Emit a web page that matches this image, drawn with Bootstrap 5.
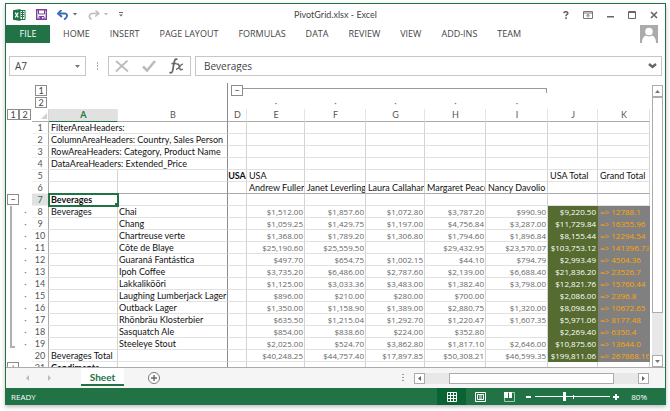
<!DOCTYPE html>
<html lang="en">
<head>
<meta charset="utf-8">
<meta name="viewport" content="width=device-width, initial-scale=1">
<title>PivotGrid.xlsx - Excel</title>
<link href="https://cdn.jsdelivr.net/npm/bootstrap@5.3.0/dist/css/bootstrap.min.css" rel="stylesheet">
<style>
  :root { --xl: #217346; --line: #d4d4d4; --edge: #ababab; --ink: #444; }
  body { font-family: "Open Sans", "Noto Sans", sans-serif; font-size: 9px; line-height: 12px; color: var(--ink); background: #fff; padding: 3px 4px 6px 5px; }
  button, input { font: inherit; color: inherit; }
  button { background: none; border: 0; padding: 0; }
  svg { display: block; }
  .app-window { height: calc(100vh - 9px); min-height: 300px; border: 1px solid var(--xl); border-bottom: 0; box-shadow: 0 2px 4px rgba(0,0,0,.25); background: #fff; }

  .title-bar { height: 21px; padding: 0 7px; }
  .title-side { flex: 1 1 0; }
  .quick-tools { gap: 10px; }
  .window-tools { gap: 14px; }
  .title-text { font-family: Lato, sans-serif; }
  .ribbon-tabs { height: 18px; padding-right: 7px; }
  .ribbon-tabs .nav-link { padding: 0; line-height: 18px; color: var(--ink); }
  .ribbon-tabs .file-tab { width: 44px; background: var(--xl); color: #fff; text-align: center; }
  .tab-list { gap: 20px; padding-left: 13px; }

  .formula-row { height: 20px; margin: 13px 3px 7px; font-size: 10px; }
  .boxed { border: 1px solid #c6c6c6; background: #fff; }
  .boxed input { border: 0; outline: 0; background: none; min-width: 0; }
  .name-box { width: 77px; padding: 0 5px; }
  .fx-box { width: 83px; padding: 0 6px; }
  .grip { width: 22px; }

  .grid-area { min-height: 0; }
  .sheet-wrap { min-width: 0; overflow: hidden; }
  .sheet-grid { table-layout: fixed; width: 100%; border-collapse: separate; border-spacing: 0; color: #111; line-height: 11px; font-family: Lato, "Open Sans", sans-serif; }
  .sheet-grid td, .sheet-grid th { padding: 0 1px 0 2px; height: 12px; overflow: hidden; white-space: nowrap; font-weight: 400; vertical-align: top; }
  .sheet-grid tbody td { border-right: 1px solid var(--line); border-bottom: 1px solid #e2e2e2; }
  .sheet-grid thead .levels th { height: 12px; padding: 0; color: #777; }
  .sheet-grid thead .levels:first-child th { height: 14px; padding-top: 2px; }
  .sheet-grid thead .letters th { height: 13px; line-height: 12px; text-align: center; border-right: 1px solid #e4e4e4; border-bottom: 1px solid var(--edge); color: #555; }
  .sheet-grid thead .letters th.corner { border-color: #fff var(--line) var(--edge) #fff; }
  .sheet-grid thead .letters th.on { background: #e1e1e1; color: var(--xl); font-weight: 700; border-bottom-color: var(--xl); }
  .sheet-grid tr > .gut { border: 0 !important; padding: 0 !important; text-align: center; color: #777; }
  .sheet-grid tbody th { text-align: center; padding: 0; border-right: 1px solid var(--edge); border-bottom: 1px solid #f0f0f0; color: #555; }
  .sheet-grid tbody th.on { background: #e1e1e1; color: var(--xl); }
  .sheet-grid .freeze { border-right: 1px solid #8c8c8c !important; padding: 0 0 0 1px; }
  .sheet-grid .freeze[colspan] { padding-left: 2px; }
  .sheet-grid .freeze-row td { border-bottom-color: var(--edge); }
  .sheet-grid .amount { text-align: right; font-family: "Open Sans", sans-serif; font-size: 8px; color: #666; }
  .sheet-grid td.total { background: #556b2f; border-color: #556b2f; color: #fff; }
  .sheet-grid td.grand { background: #808080; border-color: #808080; color: #ffa500; font-family: "Open Sans", sans-serif; font-size: 8px; }
  .sheet-grid td.picked { position: relative; overflow: visible; outline: 2px solid var(--xl); outline-offset: -1px; }
  .picked::after { content: ""; position: absolute; right: -2px; bottom: -2px; width: 4px; height: 4px; background: var(--xl); }
  .level-btn { display: block; width: 12px; height: 11px; line-height: 9px; font-size: 9px; border: 1px solid #8c8c8c; background: #fff; color: #444; text-align: center; }
  .gut .level-btn { margin-left: 1px; }
  .levels .level-btn { margin-left: 3px; }
  .span-line { height: 5px; margin: 3px 1px 0 0; border: solid #999; border-width: 1px 1px 0 0; }
  .sheet-grid .bracket { background: linear-gradient(#b0b0b0, #b0b0b0) 4px 0 / 2px 142px no-repeat, linear-gradient(#b0b0b0, #b0b0b0) 4px 140px / 5px 2px no-repeat; }

  .scroll-v { width: 11px; margin: 2px 2px 0 2px; background: #e8e8e8; }
  .scroll-btn { width: 11px; height: 12px; border: 1px solid var(--edge); background: #fff; flex: none; display: flex; align-items: center; justify-content: center; }
  .thumb { border: 1px solid var(--edge); background: #fff; }
  .scroll-v .thumb { flex: 217 0 0; }
  .scroll-v .rest { flex: 42 0 0; }

  .sheet-bar { height: 21px; flex: none; background: #f5f5f5; border-top: 1px solid var(--edge); }
  .sheet-arrows { width: 75px; padding-left: 20px; gap: 17px; }
  .sheet-tab { width: 43px; height: 18px; background: #fff; border-bottom: 2px solid var(--xl); color: var(--xl); font-family: Lato, sans-serif; font-weight: 700; font-size: 10px; line-height: 18px; text-align: center; text-decoration: none; }
  .scroll-h { width: 235px; height: 11px; margin-right: 16px; background: #e8e8e8; }
  .scroll-h .thumb { width: 165px; height: 11px; margin-left: 24px; }
  .scroll-h .scroll-btn { height: 11px; }

  .status-bar { height: 17px; flex: none; background: var(--xl); color: #fff; font-size: 8px; padding: 0 19px 0 2px; margin: 0 -1px; }
  .view-btn { width: 29px; height: 17px; display: flex; align-items: center; justify-content: center; }
  .view-btn.on { background: #0a6332; }
  .zoom-out { margin-left: 2px; }
  .zoom-range { appearance: none; -webkit-appearance: none; width: 75px; height: 11px; margin: 0 3px; background: linear-gradient(#fff, #fff) 38px 4px / 1px 4px no-repeat, linear-gradient(#fff, #fff) 0 5px / 100% 1px no-repeat; }
  .zoom-range::-webkit-slider-thumb { -webkit-appearance: none; width: 3px; height: 9px; background: #fff; border: 0; border-radius: 0; }
</style>
<script src="https://cdn.jsdelivr.net/npm/bootstrap@5.3.0/dist/js/bootstrap.bundle.min.js"></script>
</head>
<body>
<div class="app-window d-flex flex-column">
  <header>
    <div class="title-bar d-flex align-items-center">
      <div class="title-side quick-tools d-flex align-items-center">
        <svg width="13" height="12" viewBox="0 0 13 12" role="img" aria-label="Excel"><path d="M7 1.5h5v9H7" fill="#fff" stroke="#217346"/><path d="M8 3.5h3M8 5.5h3M8 7.5h3M9.500 2v8" stroke="#217346"/><path d="M0 1.200 7.500 0v12L0 10.800z" fill="#217346"/><path d="m2.200 3.700 3 4.600m0-4.600-3 4.600" stroke="#fff" stroke-width="1.200"/></svg>
        <button type="button" aria-label="Save"><svg width="11" height="11" viewBox="0 0 11 11"><path d="M.7.700h9.600v9.600H.7z" fill="#fff" stroke="#7b3fa0" stroke-width="1.400"/><path d="M2.500 1v4h6V1M3 10V7.500h5V10" fill="none" stroke="#7b3fa0"/><path d="M4 8h2v2H4z" fill="#7b3fa0"/></svg></button>
        <button type="button" aria-label="Undo" class="d-flex align-items-center"><svg width="12" height="10" viewBox="0 0 12 10"><path d="M1.500 3.500h6c3.500 0 3.500 4-.5 6" fill="none" stroke="#3d6db5" stroke-width="1.900"/><path d="M4.500 0 1 3.500l4 3.500" fill="none" stroke="#3d6db5" stroke-width="1.900"/></svg><svg width="5" height="3" viewBox="0 0 5 3" class="ms-1"><path d="M0 0h4L2 2.500z" fill="#666"/></svg></button>
        <button type="button" aria-label="Redo" class="d-flex align-items-center"><svg width="12" height="10" viewBox="0 0 12 10"><path d="M10.500 3.500h-6C1 3.500 0 7 3.500 9.300" fill="none" stroke="#bbb" stroke-width="1.500"/><path d="m7.500.5 3.300 3-3.600 3" fill="none" stroke="#bbb" stroke-width="1.500"/></svg><svg width="5" height="3" viewBox="0 0 5 3" class="ms-1"><path d="M0 0h4L2 2.500z" fill="#bbb"/></svg></button>
        <button type="button" aria-label="Customize toolbar"><svg width="5" height="5" viewBox="0 0 5 5"><path d="M0 0h4v1H0zM0 2.500h4L2 4.500z" fill="#666"/></svg></button>
      </div>
      <div class="title-text">PivotGrid.xlsx - Excel</div>
      <div class="title-side window-tools d-flex align-items-center justify-content-end">
        <button type="button" aria-label="Help"><svg width="6" height="8" viewBox="0 0 6 8"><path d="M.8 2.200C1 .2 4.800.2 4.800 2.200 4.800 3.500 3 3.500 3 5.300M3 6.300V8" fill="none" stroke="#666" stroke-width="1.600"/></svg></button>
        <button type="button" aria-label="Ribbon display"><svg width="10" height="8" viewBox="0 0 10 8"><path d="M.5.5h9v7h-9zM.5 2h9M5 6.500v-3M3.300 5 5 3.400 6.700 5" fill="none" stroke="#777"/></svg></button>
        <button type="button" aria-label="Minimize"><svg width="7" height="8" viewBox="0 0 7 8"><path d="M0 5h7v1.500H0z" fill="#666"/></svg></button>
        <button type="button" aria-label="Maximize"><svg width="8" height="8" viewBox="0 0 8 8"><path d="M.5.5h7v7h-7zM0 1.500h8" fill="none" stroke="#666"/></svg></button>
        <button type="button" aria-label="Close"><svg width="8" height="8" viewBox="0 0 8 8"><path d="m1 1 6 6m0-6L1 7" stroke="#666" stroke-width="1.600"/></svg></button>
      </div>
    </div>
    <nav class="ribbon-tabs d-flex" aria-label="Ribbon">
      <a href="#" class="nav-link file-tab">FILE</a>
      <div class="nav tab-list flex-nowrap">
        <a href="#" class="nav-link">HOME</a>
        <a href="#" class="nav-link">INSERT</a>
        <a href="#" class="nav-link">PAGE LAYOUT</a>
        <a href="#" class="nav-link">FORMULAS</a>
        <a href="#" class="nav-link">DATA</a>
        <a href="#" class="nav-link">REVIEW</a>
        <a href="#" class="nav-link">VIEW</a>
        <a href="#" class="nav-link">ADD-INS</a>
        <a href="#" class="nav-link">TEAM</a>
      </div>
      <button type="button" class="ms-auto" aria-label="Account"><svg width="18" height="18" viewBox="0 0 18 18"><path d="M0 0h18v18H0z" fill="#ababab"/><circle cx="9" cy="6.500" r="3.800" fill="#fff"/><path d="M2 18c0-4 1-6.500 4-7.500q3 1.800 6 0c3 1 4 3.500 4 7.500z" fill="#fff"/></svg></button>
    </nav>
    <div class="formula-row d-flex">
      <div class="boxed name-box d-flex align-items-center">
        <input class="flex-grow-1 w-50 p-0" type="text" value="A7" aria-label="Name box">
        <button type="button" aria-label="Show names"><svg width="5" height="3" viewBox="0 0 5 3"><path d="M0 0h5L2.500 3z" fill="#777"/></svg></button>
      </div>
      <div class="grip d-flex align-items-center justify-content-center"><svg width="1" height="8" viewBox="0 0 1 8"><path d="M0 0h1v2H0zM0 3h1v2H0zM0 6h1v2H0z" fill="#aaa"/></svg></div>
      <div class="boxed fx-box d-flex align-items-center justify-content-between">
        <button type="button" aria-label="Cancel"><svg width="14" height="12" viewBox="0 0 14 12"><path d="m1 1 12 10.500M12.500.5 1 11.500" stroke="#bbb" stroke-width="1.800"/></svg></button>
        <button type="button" aria-label="Enter"><svg width="14" height="12" viewBox="0 0 14 12"><path d="m1 6.500 4 4L13 1" fill="none" stroke="#bbb" stroke-width="2.600"/></svg></button>
        <button type="button" aria-label="Insert function"><svg width="15" height="16" viewBox="0 0 15 16"><path d="M8.500 1.500C6-.2 5.300 3 4.800 6l-1 6c-.4 2.800-1.800 3.400-3.300 2.300M2.500 5.500h5" fill="none" stroke="#666" stroke-width="1.700"/><path d="M7.500 6.500c2-1.500 2.500.5 3 3s1.500 3 3.300 1.500M14 6.200c-3-.7-3.500 5.500-7 5.100" fill="none" stroke="#666" stroke-width="1.400"/></svg></button>
      </div>
      <div class="boxed d-flex align-items-center flex-grow-1 ms-1 px-1">
        <input class="flex-grow-1 py-0 px-1" type="text" value="Beverages" aria-label="Formula bar">
        <button type="button" aria-label="Expand formula bar"><svg width="9" height="6" viewBox="0 0 9 6"><path d="m1 1 3.500 3L8 1" fill="none" stroke="#666" stroke-width="2.400"/></svg></button>
      </div>
    </div>
  </header>

  <main class="grid-area d-flex flex-grow-1">
    <div class="sheet-wrap flex-grow-1">
      <table class="sheet-grid">
        <colgroup><col style="width:13px"><col style="width:13px"><col style="width:17px"><col style="width:69px"><col style="width:110px"><col style="width:19px"><col style="width:58px"><col style="width:61px"><col style="width:59px"><col style="width:61px"><col style="width:62px"><col style="width:50px"><col></colgroup>
        <thead>
          <tr class="levels"><th colspan="2"></th><th><button type="button" class="level-btn">1</button></th><th></th><th class="freeze"></th><th colspan="6"><div class="d-flex"><button type="button" class="level-btn flex-shrink-0" aria-label="Collapse columns">−</button><div class="span-line flex-grow-1"></div></div></th><th></th><th></th></tr>
          <tr class="levels text-center"><th colspan="2"></th><th><button type="button" class="level-btn">2</button></th><th></th><th class="freeze"></th><th></th><th>·</th><th>·</th><th>·</th><th>·</th><th>·</th><th></th><th></th></tr>
          <tr class="letters"><th class="gut"><button type="button" class="level-btn">1</button></th><th class="gut"><button type="button" class="level-btn ms-0">2</button></th><th class="corner"><svg width="6" height="6" viewBox="0 0 6 6" class="ms-auto mt-1"><path d="M6 0v6H0z" fill="#d0d0d0"/></svg></th><th class="on">A</th><th class="freeze">B</th><th>D</th><th>E</th><th>F</th><th>G</th><th>H</th><th>I</th><th>J</th><th>K</th></tr>
        </thead>
        <tbody>
          <tr><td class="gut"></td><td class="gut"></td><th>1</th><td colspan="2" class="freeze">FilterAreaHeaders:</td><td></td><td></td><td></td><td></td><td></td><td></td><td></td><td></td></tr>
          <tr><td class="gut"></td><td class="gut"></td><th>2</th><td colspan="2" class="freeze">ColumnAreaHeaders: Country, Sales Person</td><td></td><td></td><td></td><td></td><td></td><td></td><td></td><td></td></tr>
          <tr><td class="gut"></td><td class="gut"></td><th>3</th><td colspan="2" class="freeze">RowAreaHeaders: Category, Product Name</td><td></td><td></td><td></td><td></td><td></td><td></td><td></td><td></td></tr>
          <tr><td class="gut"></td><td class="gut"></td><th>4</th><td colspan="2" class="freeze">DataAreaHeaders: Extended_Price</td><td></td><td></td><td></td><td></td><td></td><td></td><td></td><td></td></tr>
          <tr><td class="gut"></td><td class="gut"></td><th>5</th><td></td><td class="freeze"></td><td class="fw-bold px-0 text-center">USA</td><td>USA</td><td></td><td></td><td></td><td></td><td>USA Total</td><td>Grand Total</td></tr>
          <tr class="freeze-row"><td class="gut"></td><td class="gut"></td><th>6</th><td></td><td class="freeze"></td><td></td><td>Andrew Fuller</td><td>Janet Leverling</td><td>Laura Callahan</td><td>Margaret Peacock</td><td>Nancy Davolio</td><td></td><td></td></tr>
          <tr><td class="gut"><button type="button" class="level-btn" aria-label="Collapse rows">−</button></td><td class="gut"></td><th class="on">7</th><td class="picked fw-bold">Beverages</td><td class="freeze"></td><td></td><td></td><td></td><td></td><td></td><td></td><td></td><td></td></tr>
          <tr><td class="gut bracket" rowspan="12"></td><td class="gut">·</td><th>8</th><td>Beverages</td><td class="freeze">Chai</td><td></td><td class="amount">$1,512.00</td><td class="amount">$1,857.60</td><td class="amount">$1,072.80</td><td class="amount">$3,787.20</td><td class="amount">$990.90</td><td class="amount total">$9,220.50</td><td class="grand">=&gt; 12788.1</td></tr>
          <tr><td class="gut">·</td><th>9</th><td></td><td class="freeze">Chang</td><td></td><td class="amount">$1,059.25</td><td class="amount">$1,429.75</td><td class="amount">$1,197.00</td><td class="amount">$4,756.84</td><td class="amount">$3,287.00</td><td class="amount total">$11,729.84</td><td class="grand">=&gt; 16355.96</td></tr>
          <tr><td class="gut">·</td><th>10</th><td></td><td class="freeze">Chartreuse verte</td><td></td><td class="amount">$1,368.00</td><td class="amount">$1,789.20</td><td class="amount">$1,306.80</td><td class="amount">$1,794.60</td><td class="amount">$1,896.84</td><td class="amount total">$8,155.44</td><td class="grand">=&gt; 12294.54</td></tr>
          <tr><td class="gut">·</td><th>11</th><td></td><td class="freeze">Côte de Blaye</td><td></td><td class="amount">$25,190.60</td><td class="amount">$25,559.50</td><td></td><td class="amount">$29,432.95</td><td class="amount">$23,570.07</td><td class="amount total">$103,753.12</td><td class="grand">=&gt; 141396.73</td></tr>
          <tr><td class="gut">·</td><th>12</th><td></td><td class="freeze">Guaraná Fantástica</td><td></td><td class="amount">$497.70</td><td class="amount">$654.75</td><td class="amount">$1,002.15</td><td class="amount">$44.10</td><td class="amount">$794.79</td><td class="amount total">$2,993.49</td><td class="grand">=&gt; 4504.36</td></tr>
          <tr><td class="gut">·</td><th>13</th><td></td><td class="freeze">Ipoh Coffee</td><td></td><td class="amount">$3,735.20</td><td class="amount">$6,486.00</td><td class="amount">$2,787.60</td><td class="amount">$2,139.00</td><td class="amount">$6,688.40</td><td class="amount total">$21,836.20</td><td class="grand">=&gt; 23526.7</td></tr>
          <tr><td class="gut">·</td><th>14</th><td></td><td class="freeze">Lakkalikööri</td><td></td><td class="amount">$1,125.00</td><td class="amount">$3,033.36</td><td class="amount">$3,483.00</td><td class="amount">$1,382.40</td><td class="amount">$3,798.00</td><td class="amount total">$12,821.76</td><td class="grand">=&gt; 15760.44</td></tr>
          <tr><td class="gut">·</td><th>15</th><td></td><td class="freeze">Laughing Lumberjack Lager</td><td></td><td class="amount">$896.00</td><td class="amount">$210.00</td><td class="amount">$280.00</td><td class="amount">$700.00</td><td></td><td class="amount total">$2,086.00</td><td class="grand">=&gt; 2396.8</td></tr>
          <tr><td class="gut">·</td><th>16</th><td></td><td class="freeze">Outback Lager</td><td></td><td class="amount">$1,350.00</td><td class="amount">$1,158.90</td><td class="amount">$1,389.00</td><td class="amount">$2,880.75</td><td class="amount">$1,320.00</td><td class="amount total">$8,098.65</td><td class="grand">=&gt; 10672.65</td></tr>
          <tr><td class="gut">·</td><th>17</th><td></td><td class="freeze">Rhönbräu Klosterbier</td><td></td><td class="amount">$635.50</td><td class="amount">$1,215.04</td><td class="amount">$1,292.70</td><td class="amount">$1,220.47</td><td class="amount">$1,607.35</td><td class="amount total">$5,971.06</td><td class="grand">=&gt; 8177.48</td></tr>
          <tr><td class="gut">·</td><th>18</th><td></td><td class="freeze">Sasquatch Ale</td><td></td><td class="amount">$854.00</td><td class="amount">$838.60</td><td class="amount">$224.00</td><td class="amount">$352.80</td><td></td><td class="amount total">$2,269.40</td><td class="grand">=&gt; 6350.4</td></tr>
          <tr><td class="gut">·</td><th>19</th><td></td><td class="freeze">Steeleye Stout</td><td></td><td class="amount">$2,025.00</td><td class="amount">$524.70</td><td class="amount">$3,862.80</td><td class="amount">$1,817.10</td><td class="amount">$2,646.00</td><td class="amount total">$10,875.60</td><td class="grand">=&gt; 13644.0</td></tr>
          <tr><td class="gut"></td><td class="gut"></td><th>20</th><td>Beverages Total</td><td class="freeze"></td><td></td><td class="amount">$40,248.25</td><td class="amount">$44,757.40</td><td class="amount">$17,897.85</td><td class="amount">$50,308.21</td><td class="amount">$46,599.35</td><td class="amount total">$199,811.06</td><td class="grand">=&gt; 267868.16</td></tr>
          <tr><td class="gut"><button type="button" class="level-btn" aria-label="Expand rows">+</button></td><td class="gut"></td><th>21</th><td class="fw-bold">Condiments</td><td class="freeze"></td><td></td><td></td><td></td><td></td><td></td><td></td><td></td><td></td></tr>
        </tbody>
      </table>
    </div>
    <div class="scroll-v d-flex flex-column flex-shrink-0">
      <button type="button" class="scroll-btn" aria-label="Scroll up"><svg width="5" height="3" viewBox="0 0 5 3"><path d="M0 3h5L2.500 0z" fill="#777"/></svg></button>
      <div class="thumb"></div><div class="rest"></div>
      <button type="button" class="scroll-btn" aria-label="Scroll down"><svg width="5" height="3" viewBox="0 0 5 3"><path d="M0 0h5L2.500 3z" fill="#777"/></svg></button>
    </div>
  </main>

  <div class="sheet-bar d-flex">
    <div class="sheet-arrows d-flex align-items-center">
      <button type="button" aria-label="Previous sheet"><svg width="4" height="6" viewBox="0 0 4 6"><path d="M3 0v6L0 3z" fill="#bbb"/></svg></button>
      <button type="button" aria-label="Next sheet"><svg width="4" height="6" viewBox="0 0 4 6"><path d="M1 0v6l3-3z" fill="#bbb"/></svg></button>
    </div>
    <a href="#" class="sheet-tab">Sheet</a>
    <button type="button" class="ms-4" aria-label="New sheet"><svg width="12" height="12" viewBox="0 0 12 12"><circle cx="6" cy="6" r="5.500" fill="#fff" stroke="#777"/><path d="M6 3v6M3 6h6" stroke="#666" stroke-width="1.400"/></svg></button>
    <div class="ms-auto d-flex align-items-center">
      <div class="grip d-flex justify-content-center"><svg width="2" height="8" viewBox="0 0 2 8"><path d="M0 0h2v1H0zM0 3h2v1H0zM0 6h2v1H0z" fill="#999"/></svg></div>
      <div class="scroll-h d-flex">
        <button type="button" class="scroll-btn" aria-label="Scroll left"><svg width="3" height="5" viewBox="0 0 3 5"><path d="M3 0v5L0 2.500z" fill="#666"/></svg></button>
        <div class="thumb"></div>
        <button type="button" class="scroll-btn ms-auto" aria-label="Scroll right"><svg width="3" height="5" viewBox="0 0 3 5"><path d="M0 0v5l3-2.500z" fill="#666"/></svg></button>
      </div>
    </div>
  </div>

  <footer class="status-bar d-flex align-items-center">
    <span class="me-auto ps-1">READY</span>
    <button type="button" class="view-btn on" aria-label="Normal view"><svg width="10" height="10" viewBox="0 0 10 10"><path d="M.5.5h9v9h-9zM0 3.500h10M0 6.500h10M3.500 0v10M6.500 0v10" fill="none" stroke="#fff"/></svg></button>
    <button type="button" class="view-btn" aria-label="Page layout view"><svg width="11" height="10" viewBox="0 0 11 10"><path d="M.5.5h10v9H.5zM2.500 2.500h6v5h-6zM4 4h3M4 6h3" fill="none" stroke="#fff"/></svg></button>
    <button type="button" class="view-btn" aria-label="Page break view"><svg width="11" height="10" viewBox="0 0 11 10"><path d="M.5.5h10v9H.5z" fill="none" stroke="#a6c7b5"/><path d="M0 0h4v6H0zM5 0h3v6H5z" fill="#fff"/></svg></button>
    <button type="button" class="zoom-out" aria-label="Zoom out"><svg width="6" height="6" viewBox="0 0 6 6"><path d="M0 2h5v2H0z" fill="#fff"/></svg></button>
    <input type="range" class="zoom-range" min="10" max="190" value="80" aria-label="Zoom">
    <button type="button" aria-label="Zoom in"><svg width="6" height="6" viewBox="0 0 6 6"><path d="M0 2h6v2H0zM2 0h2v6H2z" fill="#fff"/></svg></button>
    <span class="ms-2 ps-1">80%</span>
  </footer>
</div>
</body>
</html>
